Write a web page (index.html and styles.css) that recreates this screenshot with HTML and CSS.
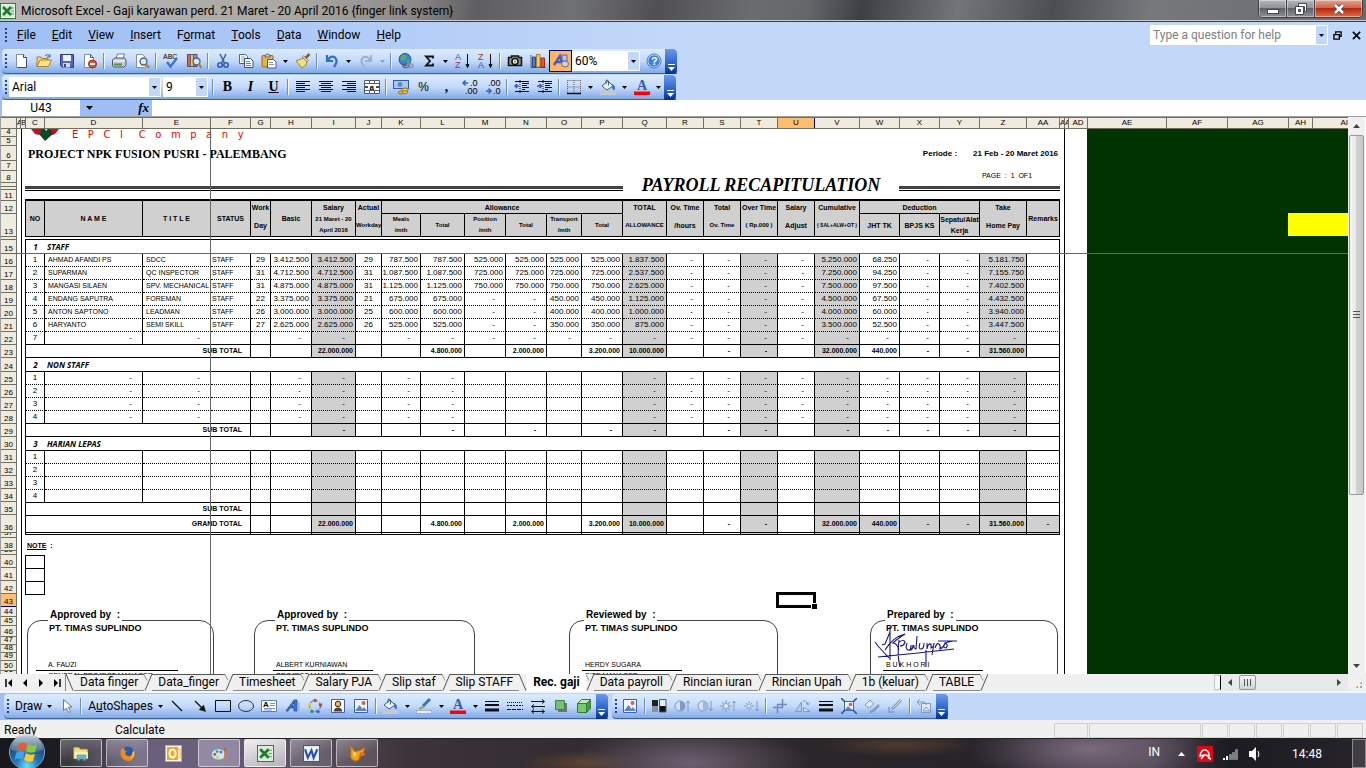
FILE: index.html
```html
<!DOCTYPE html>
<html lang="en">
<head>
    <meta charset="UTF-8">
    <meta name="viewport" content="width=device-width, initial-scale=1.0">
    <title>Microsoft Excel - Gaji karyawan</title>
    <link rel="stylesheet" href="styles.css">
</head>
<body>
    <svg class="sprite" xmlns="http://www.w3.org/2000/svg">
        <symbol id="excel" viewBox="0 0 16 16"><rect x="0.5" y="0.5" width="15" height="15" fill="#f2f7f0" stroke="#2f7d36"/><rect x="2" y="2" width="12" height="12" fill="#d7ead6"/><path d="M3 4l8 8M11 4l-8 8" stroke="#1c7a2c" stroke-width="2.6"/><path d="M11 5h3M11 8h3M11 11h3" stroke="#57a35c"/></symbol>
        <symbol id="new" viewBox="0 0 16 16"><path d="M3.500 1.500h7l3 3v10h-10z" fill="#fff" stroke="#7d8fb3"/><path d="M10.500 1.500v3h3" fill="#dbe5f7" stroke="#3a4a72"/><path d="M13.500 5v9.500h-9" fill="none" stroke="#3a4a72"/></symbol>
        <symbol id="open" viewBox="0 0 16 16"><path d="M1 13V4h4l1 1.500h6V8" fill="#f6d475" stroke="#a9792a"/><path d="M1 13.500l3-6.500h11.500l-3 6.500z" fill="#fbe38d" stroke="#b27f23"/><path d="M9 3q3-3 5 1m0 0v-3m0 3h-3" fill="none" stroke="#3a66b0"/></symbol>
        <symbol id="save" viewBox="0 0 16 16"><path d="M1.500 1.500h13v13h-11l-2-2z" fill="#5a64c6" stroke="#2f3788"/><rect x="4" y="2" width="8" height="6" fill="#f1f4fd"/><rect x="4" y="10" width="7" height="4.500" fill="#d7dcf3"/><rect x="5" y="11" width="2" height="3" fill="#39408f"/></symbol>
        <symbol id="perm" viewBox="0 0 16 16"><path d="M2.500 1.500h6l3 3v10h-9z" fill="#fff" stroke="#7d8fb3"/><path d="M8.500 1.500v3h3" fill="none" stroke="#3a4a72"/><circle cx="10.500" cy="11" r="4" fill="#e2522e" stroke="#a82a14"/><path d="M8 11h5" stroke="#fff" stroke-width="2"/></symbol>
        <symbol id="print" viewBox="0 0 16 16"><path d="M5 6l1.500-5h7L12 6z" fill="#fff" stroke="#6c7891"/><path d="M1.500 7l2-2h10l1.500 2v5l-2 2h-10l-1.500-1z" fill="#c7ccd2" stroke="#4e5866"/><path d="M2 8h12" stroke="#fff"/><path d="M3 11.500h8" stroke="#3f9a44" stroke-width="2"/></symbol>
        <symbol id="preview" viewBox="0 0 16 16"><path d="M2.500 1.500h6l3 3v10h-9z" fill="#fff" stroke="#7d8fb3"/><circle cx="9.500" cy="8.500" r="3.500" fill="#d4e8f6" stroke="#56657d" stroke-width="1.400"/><path d="M12 11l3 4" stroke="#b3813d" stroke-width="2.200"/></symbol>
        <symbol id="spell" viewBox="0 0 16 16"><text x="0" y="6" font-size="7">ABC</text><path d="M4 9l3.500 4.500L14 5" fill="none" stroke="#3d73cf" stroke-width="2.400"/></symbol>
        <symbol id="research" viewBox="0 0 16 16"><path d="M1.500 1.500h3v12h-3z" fill="#c96a6a" stroke="#6b3c7e"/><path d="M4.500 1.500h3v12h-3z" fill="#e9c86e" stroke="#7d5d3a"/><path d="M7.500 1.500h3.500v12h-3.500z" fill="#8d99d9" stroke="#454d94"/><circle cx="10.500" cy="8.500" r="3.500" fill="#d4e8f6" stroke="#56657d" stroke-width="1.400"/><path d="M13 11l2.500 4" stroke="#b3813d" stroke-width="2.200"/></symbol>
        <symbol id="cut" viewBox="0 0 16 16"><path d="M5 1l4.500 9M11 1L6.500 10" stroke="#44608f" stroke-width="1.500"/><circle cx="5" cy="12" r="2.200" fill="none" stroke="#2d5bb8" stroke-width="1.600"/><circle cx="11" cy="12" r="2.200" fill="none" stroke="#2d5bb8" stroke-width="1.600"/></symbol>
        <symbol id="copy" viewBox="0 0 16 16"><path d="M1.500 1.500h6l2 2v7h-8z" fill="#fff" stroke="#4668ad"/><path d="M3 4h4M3 6h5M3 8h5" stroke="#86a4dc"/><path d="M6.500 5.500h6l2.500 2.500v6.500h-8.500z" fill="#fff" stroke="#2c4f9a"/><path d="M8 8.500h4M8 10.500h5M8 12.500h5" stroke="#5c80c8"/></symbol>
        <symbol id="paste" viewBox="0 0 16 16"><rect x="1" y="2.500" width="11" height="11.500" rx="1" fill="#eab04a" stroke="#9c6a1c"/><path d="M4 4V2h1.500l1-1.500 1 1.500H9v2z" fill="#d8dce6" stroke="#5c6478"/><path d="M6.500 6.500h6l2.500 2.500v6h-8.500z" fill="#fff" stroke="#3b5fa8"/><path d="M8 9.500h4M8 11.500h5" stroke="#7f9bd6"/></symbol>
        <symbol id="brush" viewBox="0 0 16 16"><path d="M1 8l6 7 4-3 1-4-4-3z" fill="#f3df7c" stroke="#a5812e"/><path d="M7 4l5 5 1.500-1.500-5-5z" fill="#c9ced8" stroke="#636a78" stroke-width="0.600"/><path d="M10.500 5L14.500 1" stroke="#8e5b2b" stroke-width="2.500"/></symbol>
        <symbol id="undo" viewBox="0 0 16 16"><path d="M3 2v6h6M3.500 7.500Q7 2 11 4.500Q14.500 8 10 14" fill="none" stroke="#2f6bd0" stroke-width="2.200"/></symbol>
        <symbol id="redo" viewBox="0 0 16 16"><path d="M13 2v6H7M12.500 7.500Q9 2 5 4.500Q1.500 8 6 14" fill="none" stroke="#9cafd3" stroke-width="2"/></symbol>
        <symbol id="link" viewBox="0 0 16 16"><circle cx="7" cy="6.500" r="6" fill="#3f86cf" stroke="#245796"/><path d="M3 3q3-2.500 5 0t-2 4q-4 1-3-4M9 7q3-1 3 1l-3 3z" fill="#58b04c"/><rect x="5" y="11" width="6" height="3.500" rx="1.700" fill="none" stroke="#56657d" stroke-width="1.500"/><rect x="9" y="11" width="6" height="3.500" rx="1.700" fill="none" stroke="#8391ab" stroke-width="1.500"/></symbol>
        <symbol id="sum" viewBox="0 0 16 16"><path d="M12 5.500V3.500H5l4 4.500-4 4.500h7v-2" fill="none" stroke="#111" stroke-width="1.800"/></symbol>
        <symbol id="az" viewBox="0 0 16 16"><text x="0" y="7" font-size="9" fill="#3559a8">A</text><text x="0" y="15" font-size="9" fill="#a03434">Z</text><path d="M12.500 1v12M11 11.500l1.500 3 1.500-3z" fill="#111" stroke="#111"/></symbol>
        <symbol id="za" viewBox="0 0 16 16"><text x="0" y="7" font-size="9" fill="#a03434">Z</text><text x="0" y="15" font-size="9" fill="#3559a8">A</text><path d="M12.500 1v12M11 11.500l1.500 3 1.500-3z" fill="#111" stroke="#111"/></symbol>
        <symbol id="camera" viewBox="0 0 16 16"><path d="M1.500 4.500h3v-1.500h7v1.500h3v8h-13z" fill="#8f9484" stroke="#111" stroke-width="1.500"/><circle cx="8" cy="8.500" r="3" fill="#fff" stroke="#111" stroke-width="1.500"/><circle cx="8" cy="8.500" r="1" fill="#4d7b7b"/></symbol>
        <symbol id="chart" viewBox="0 0 16 16"><path d="M1 2v12.500h14.500" fill="none" stroke="#555"/><path d="M2.500 4h3v10h-3z" fill="#4b7fd8" stroke="#244a94"/><path d="M6.500 1.500h3.500v12.500h-3.500z" fill="#f6cf4f" stroke="#a8801d"/><path d="M11 5h3.500v9h-3.500z" fill="#e0573b" stroke="#962c17"/></symbol>
        <symbol id="drawing" viewBox="0 0 16 16"><path d="M1 12L7 3l3 9M3.500 9h6" fill="none" stroke="#5058b8" stroke-width="2.400"/><path d="M9 2h5v6h-5z" fill="#b9c4ea" stroke="#5b6298"/><ellipse cx="12" cy="11" rx="3.500" ry="3" fill="#cfd2d8" stroke="#6d7078"/></symbol>
        <symbol id="help" viewBox="0 0 16 16"><circle cx="8" cy="8" r="6.300" fill="#3f7fe0" stroke="#fff"/><circle cx="8" cy="8" r="7" fill="none" stroke="#2456ad" stroke-width="0.800"/><text x="5" y="12" font-size="11" font-weight="bold" fill="#fff">?</text></symbol>
        <symbol id="left" viewBox="0 0 16 16"><path d="M1 2.500h14M1 4.500h9M1 6.500h14M1 8.500h9M1 10.500h14M1 12.500h9" stroke="#111"/></symbol>
        <symbol id="center" viewBox="0 0 16 16"><path d="M1 2.500h14M3 4.500h10M1 6.500h14M3 8.500h10M1 10.500h14M3 12.500h10" stroke="#111"/></symbol>
        <symbol id="right" viewBox="0 0 16 16"><path d="M1 2.500h14M6 4.500h9M1 6.500h14M6 8.500h9M1 10.500h14M6 12.500h9" stroke="#111"/></symbol>
        <symbol id="merge" viewBox="0 0 16 16"><path d="M0.500 1.500h15v13h-15zM0.500 4.500h15M0.500 11.500h15M5.500 1.500v3M10.500 1.500v3M5.500 11.500v3M10.500 11.500v3" fill="#fff" stroke="#4d5c7a"/><text x="5.500" y="10.500" font-size="8" font-weight="bold">a</text><path d="M1 8h3M12 8h3" stroke="#111" stroke-width="1.500"/></symbol>
        <symbol id="currency" viewBox="0 0 16 16"><rect x="0.500" y="1.500" width="15" height="8" fill="#a9c6ef" stroke="#355c9e"/><circle cx="7" cy="5.500" r="2.400" fill="#5b87cf"/><ellipse cx="8" cy="13.500" rx="3" ry="1.500" fill="#f2b53a" stroke="#a6720f"/><ellipse cx="12" cy="13" rx="3" ry="1.500" fill="#f7cb5c" stroke="#a6720f"/><ellipse cx="12" cy="10.500" rx="3" ry="1.500" fill="#f7cb5c" stroke="#a6720f"/></symbol>
        <symbol id="decinc" viewBox="0 0 16 16"><text x="8" y="7" font-size="9">.0</text><text x="3" y="15" font-size="9">.00</text><path d="M1 4h5M3.500 1.500L1 4l2.500 2.500" fill="none" stroke="#2f62c4" stroke-width="1.500"/></symbol>
        <symbol id="decdec" viewBox="0 0 16 16"><text x="3" y="7" font-size="9">.00</text><text x="8" y="15" font-size="9">.0</text><path d="M1 12h5M3.500 9.500L6 12l-2.500 2.500" fill="none" stroke="#2f62c4" stroke-width="1.500"/></symbol>
        <symbol id="outdent" viewBox="0 0 16 16"><path d="M1 2.500h14M8 4.500h7M8 6.500h5M8 8.500h7M8 10.500h3M1 12.500h14" stroke="#111"/><path d="M6 1v14" stroke="#111" stroke-dasharray="1 1"/><path d="M1 7h4M3 5L1 7l2 2" fill="none" stroke="#2f62c4" stroke-width="1.500"/></symbol>
        <symbol id="indent" viewBox="0 0 16 16"><path d="M1 2.500h14M8 4.500h7M8 6.500h5M8 8.500h7M8 10.500h3M1 12.500h14" stroke="#111"/><path d="M6 1v14" stroke="#111" stroke-dasharray="1 1"/><path d="M0 7h4M2.500 5l2 2-2 2" fill="none" stroke="#2f62c4" stroke-width="1.500"/></symbol>
        <symbol id="borders" viewBox="0 0 16 16"><path d="M1.500 1.500h13M1.500 8h13M1.500 1v13M8 1v13M14.500 1v13" stroke="#666" stroke-dasharray="1 1"/><path d="M1 14.500h14" stroke="#111" stroke-width="1.500"/></symbol>
        <symbol id="fill" viewBox="0 0 16 16"><path d="M2 7l6-5 5 5-6 4z" fill="#eef3fa" stroke="#455d86"/><path d="M6 5V1.500q2-1.500 2.500 1v4" fill="none" stroke="#455d86"/><path d="M12 5q4 2 2 6-2-1-1.500-5z" fill="#3c73c8" stroke="#3c73c8"/><rect y="12.500" width="16" height="3.500" fill="#c6c8cb"/></symbol>
        <symbol id="fontcolor" viewBox="0 0 16 16"><text x="3" y="11" font-size="14" font-weight="bold" font-family="Liberation Serif" fill="#3559a8">A</text><rect y="12.500" width="16" height="3.500" fill="#f00"/></symbol>
        <symbol id="pointer" viewBox="0 0 16 16"><path d="M4.500 1.500v11l3-2.500 2 4.500 2-1-2-4.500h3.500z" fill="#fff" stroke="#6a7890"/></symbol>
        <symbol id="line" viewBox="0 0 16 16"><path d="M3 3l10 10" stroke="#111" stroke-width="1.300"/></symbol>
        <symbol id="arrow" viewBox="0 0 16 16"><path d="M3 3l8 8M13 13l-5-1.500 3.500-3.500z" fill="#111" stroke="#111" stroke-width="1.300"/></symbol>
        <symbol id="rect" viewBox="0 0 16 16"><path d="M0.500 2.500h15v11h-15z" fill="none" stroke="#111"/></symbol>
        <symbol id="oval" viewBox="0 0 16 16"><ellipse cx="8" cy="8" rx="7.500" ry="5.500" fill="none" stroke="#333"/></symbol>
        <symbol id="textbox" viewBox="0 0 16 16"><path d="M0.500 2.500h15v11h-15z" fill="#fff" stroke="#6a7fa8"/><text x="2" y="9" font-size="8" font-weight="bold">A</text><path d="M9 5.500h5M9 7.500h5M3 10.500h11M3 12h8" stroke="#7793c7"/></symbol>
        <symbol id="wordart" viewBox="0 0 16 16"><path d="M2 13L10 2h3v11h-3v-3H6l-2 3zM8 8h2.500V4z" fill="#3f74d2" stroke="#254a91" stroke-width="0.800" fill-rule="evenodd"/><path d="M13.500 3l2 2v9l-2-1z" fill="#8fb2ea"/></symbol>
        <symbol id="diagram" viewBox="0 0 16 16"><circle cx="8" cy="8" r="5.500" fill="none" stroke="#334a86" stroke-dasharray="3 2"/><circle cx="8" cy="2.500" r="1.800" fill="#cf4a33"/><circle cx="2.500" cy="7" r="1.800" fill="#e5c23f"/><circle cx="13.500" cy="7" r="1.800" fill="#cf4a33"/><circle cx="5" cy="13.500" r="1.800" fill="#3e9c46"/><circle cx="11" cy="13.500" r="1.800" fill="#3f6fd0"/></symbol>
        <symbol id="clip" viewBox="0 0 16 16"><path d="M1.500 1.500h13v13h-13z" fill="#fff" stroke="#3f62a8"/><circle cx="8" cy="6" r="2.800" fill="#edb66f" stroke="#3b2718"/><path d="M3.500 13.500q1-4 4.500-4t4.500 4z" fill="#58412c"/></symbol>
        <symbol id="picture" viewBox="0 0 16 16"><path d="M1.500 1.500h13v13h-13z" fill="#eef4ff" stroke="#3f62a8"/><path d="M2 13l4.500-6 3 4 1.500-2L14 13z" fill="#5d83c7"/><circle cx="10.500" cy="5" r="2" fill="#d9603a"/></symbol>
        <symbol id="linecolor" viewBox="0 0 16 16"><path d="M14 1L7 8" stroke="#3a6fcb" stroke-width="3"/><path d="M7.500 7L3 11l5-1.500z" fill="#e6b95c" stroke="#8e6a26" stroke-width="0.600"/><rect x="0.500" y="12.500" width="15" height="3" fill="#e5ebf5" stroke="#8c98ae" stroke-width="0.600"/></symbol>
        <symbol id="linestyle" viewBox="0 0 16 16"><path d="M1 3.500h14" stroke="#111"/><path d="M1 7h14" stroke="#111" stroke-width="2"/><path d="M1 12h14" stroke="#111" stroke-width="3"/></symbol>
        <symbol id="dash" viewBox="0 0 16 16"><path d="M0 4.500h16" stroke="#111" stroke-dasharray="1 1"/><path d="M0 7.500h16" stroke="#111" stroke-dasharray="2 1"/><path d="M0 11.500h16" stroke="#111" stroke-dasharray="4 1"/></symbol>
        <symbol id="arrowstyle" viewBox="0 0 16 16"><path d="M1 3.500h13M2 8.500h13M2 13.500h12M12 1.500l2.500 2-2.500 2M4 6.500L1.500 8.500l2.500 2M4 11.500l-2.500 2 2.500 2M12 11.500l2.500 2-2.500 2" fill="none" stroke="#111"/></symbol>
        <symbol id="shadow" viewBox="0 0 16 16"><path d="M5 5h9v9H5z" fill="#6d776f"/><path d="M2.500 2.500h9v9h-9z" fill="#74c26e" stroke="#3d8541"/></symbol>
        <symbol id="cube" viewBox="0 0 16 16"><path d="M1.500 5.500h9v9h-9z" fill="#7bc873" stroke="#2f7d36"/><path d="M1.500 5.500l4-4h9l-4 4z" fill="#c0e8b8" stroke="#2f7d36"/><path d="M10.500 5.500l4-4v9l-4 4z" fill="#4b9a4c" stroke="#2f7d36"/></symbol>
        <symbol id="color" viewBox="0 0 16 16"><path d="M1 2h6v6H1z" fill="#222"/><path d="M1 8h6v6H1z" fill="#89919e"/><path d="M9 2h6v6H9z" fill="#e8edf5"/><path d="M9 8h6v6H9z" fill="#111"/><path d="M8.500 1.500h6.500v12.500H8.500z" fill="none" stroke="#555"/></symbol>
        <symbol id="contup" viewBox="0 0 16 16"><circle cx="6" cy="8" r="5" fill="#d3e0f5" stroke="#8299c4"/><path d="M6 3v10a5 5 0 0 0 0-10z" fill="#8299c4"/><path d="M14 13V3M12 5.500L14 3l2 2.500" fill="none" stroke="#8299c4"/></symbol>
        <symbol id="contdn" viewBox="0 0 16 16"><circle cx="6" cy="8" r="5" fill="#d3e0f5" stroke="#8299c4"/><path d="M6 3v10a5 5 0 0 0 0-10z" fill="#a6b8da"/><path d="M14 3v10M12 10.500l2 2.500 2-2.500" fill="none" stroke="#8299c4"/></symbol>
        <symbol id="briup" viewBox="0 0 16 16"><circle cx="6" cy="8" r="2.500" fill="#eef3fc" stroke="#8299c4"/><path d="M6 2v3M6 11v3M0 8h3M9 8h3M2 4l2 2M8 10l2 2M10 4L8 6M4 10l-2 2M14 13V3M12.500 5L14 3l1.500 2" fill="none" stroke="#8299c4"/></symbol>
        <symbol id="bridn" viewBox="0 0 16 16"><circle cx="6" cy="8" r="2" fill="#eef3fc" stroke="#8299c4"/><path d="M6 3v2M6 11v2M1 8h2M9 8h2M3 5l1 1M8 10l1 1M9 5L8 6M4 10l-1 1M14 3v10M12.500 11l1.500 2 1.500-2" fill="none" stroke="#8299c4"/></symbol>
        <symbol id="crop" viewBox="0 0 16 16"><path d="M5.500 15V6.500H15M1 9.500h9.500V1" fill="none" stroke="#7088b8" stroke-width="1.500"/></symbol>
        <symbol id="rotate" viewBox="0 0 16 16"><path d="M6.500 4v9.500h-6z" fill="#b9c8e4" stroke="#8299c4"/><path d="M8.500 9.500l6.500 4H8.500z" fill="#dfe8f7" stroke="#8299c4"/><path d="M8 3q4-1 5 4M11 5l2 2 1.500-2.500" fill="none" stroke="#8299c4"/></symbol>
        <symbol id="compress" viewBox="0 0 16 16"><path d="M3.500 3.500h9v9h-9z" fill="#eef4ff" stroke="#3f62a8"/><path d="M4 12l3-4 2 2 3 2z" fill="#5d83c7"/><circle cx="9.500" cy="6.500" r="1.800" fill="#d9603a"/><path d="M0 0l4 4M16 0l-4 4M0 16l4-4M16 16l-4-4" stroke="#284c96" stroke-width="1.500"/></symbol>
        <symbol id="format" viewBox="0 0 16 16"><path d="M1 7l5-5 4 4-5 4z" fill="#dfe8f7" stroke="#8299c4"/><path d="M15 7l-6 6-3 1" fill="none" stroke="#8299c4" stroke-width="2.500"/></symbol>
        <symbol id="transp" viewBox="0 0 16 16"><path d="M14 2L5 11" stroke="#8299c4" stroke-width="3"/><path d="M14 2L6 10" stroke="#dfe8f7"/><path d="M2 9v5h5" fill="none" stroke="#8299c4" stroke-width="1.500"/></symbol>
        <symbol id="reset" viewBox="0 0 16 16"><path d="M5.500 5.500h9v9h-9z" fill="#dfe8f7" stroke="#8299c4"/><path d="M7 13l3-4 2 2 2 2zM1 4h7q2 0 2 3M4 1L1 4l3 3" fill="none" stroke="#8299c4"/></symbol>
        <symbol id="caret" viewBox="0 0 5 3"><path d="M0 0h5L2.500 3z"/></symbol>
        <symbol id="explorer" viewBox="0 0 20 18"><path d="M1 15V2h6l1.500 2H17v11z" fill="#f4dc82" stroke="#caa13e"/><path d="M1.500 7h16v8h-16z" fill="#fbefb0"/><path d="M5 17v-6h10v6h-3v-3H8v3z" fill="#6fc1ea" stroke="#3184b8"/></symbol>
        <symbol id="firefox" viewBox="0 0 18 18"><circle cx="9" cy="9" r="7.500" fill="#2a5ba8"/><path d="M2 5q-2 8 4 11t10-3q1.500-4-.5-8 0 5-4 7-5 0-5-4l2-1q-4-1-2.500-4-2 0-4 2z" fill="#f08a1d"/><path d="M16 6q1 7-5 9 4-3 3-7z" fill="#f8c93c"/></symbol>
        <symbol id="outlook" viewBox="0 0 18 18"><rect x="0.500" y="0.500" width="17" height="17" fill="#fff" stroke="#f0a81c"/><rect x="2" y="2" width="12" height="14" fill="#f5a81c"/><ellipse cx="8" cy="9" rx="3.200" ry="4.200" fill="none" stroke="#fff" stroke-width="2"/><path d="M14 4.500h2v9h-2" fill="none" stroke="#f5a81c"/></symbol>
        <symbol id="paint" viewBox="0 0 18 18"><ellipse cx="8" cy="10" rx="7.500" ry="6" fill="#cfe4f4" stroke="#5f98c4"/><circle cx="4" cy="10" r="1.500" fill="#d8402c"/><circle cx="6.500" cy="7" r="1.500" fill="#41a047"/><circle cx="10.500" cy="7.500" r="1.500" fill="#2b6fd0"/><circle cx="7" cy="13" r="1.500" fill="#eec335"/><path d="M14 6h2v10h-2z" fill="#e0761f"/><path d="M13.500 6q1.500-8 3 0z" fill="#b26a2c"/></symbol>
        <symbol id="word" viewBox="0 0 16 16"><rect x="0.500" y="0.500" width="15" height="15" fill="#eef3fc" stroke="#2c5ab0"/><path d="M2 4l2.500 8L8 5l2 7 3.500-8" fill="none" stroke="#2553ad" stroke-width="2"/></symbol>
        <symbol id="fox" viewBox="0 0 18 18"><path d="M2 1l4 6 5-1 6-3-2 5 2 2-5 2-2 4-4 1-4-3z" fill="#f6a01c" stroke="#cf6d0c"/><path d="M4 8l4 0-2 5z" fill="#fde26a"/><path d="M12 8l4 0-6 6z" fill="#e0641b"/></symbol>
    </svg>

    <header class="titlebar">
        <svg class="app-icon"><use href="#excel"/></svg>
        <h1>Microsoft Excel - Gaji karyawan perd. 21 Maret - 20 April 2016 {finger link system}</h1>
        <div class="window-buttons">
            <button class="win" title="Minimize"><svg viewBox="0 0 14 12"><rect x="1.500" y="6.500" width="11" height="4" fill="#fff" stroke="#445"/></svg></button>
            <button class="win" title="Restore"><svg viewBox="0 0 14 12"><path d="M4.500 0.500h8v8h-2v-5h-6z" fill="#fff" stroke="#445"/><path d="M1.500 3.500h8v8h-8zM4.500 6.500v2h2v-2z" fill="#fff" fill-rule="evenodd" stroke="#445"/></svg></button>
            <button class="win win-close" title="Close"><svg viewBox="0 0 14 12"><path d="M3 2l8 8M11 2l-8 8" stroke="#545" stroke-width="4.500"/><path d="M3 2l8 8M11 2l-8 8" stroke="#fff" stroke-width="2.500"/></svg></button>
        </div>
    </header>

    <div class="chrome">
        <nav class="menubar">
            <span class="grip"></span>
            <button><u>F</u>ile</button>
            <button><u>E</u>dit</button>
            <button><u>V</u>iew</button>
            <button><u>I</u>nsert</button>
            <button>F<u>o</u>rmat</button>
            <button><u>T</u>ools</button>
            <button><u>D</u>ata</button>
            <button><u>W</u>indow</button>
            <button><u>H</u>elp</button>
            <div class="ask">
                <input type="text" placeholder="Type a question for help" aria-label="Type a question for help">
                <button class="drop" title="Recent questions"><svg class="caret"><use href="#caret"/></svg></button>
            </div>
            <button class="doc-btn" title="Restore Window"><svg viewBox="0 0 10 10"><path d="M3 3V1h6v5H7" fill="none" stroke="#000" stroke-width="1.500"/><path d="M1 4h6v5H1z" fill="none" stroke="#000" stroke-width="1.500"/></svg></button>
            <button class="doc-btn" title="Close Window"><svg viewBox="0 0 10 10"><path d="M1 1l8 8M9 1L1 9" stroke="#000" stroke-width="1.800"/></svg></button>
        </nav>

        <div class="toolbar">
            <span class="grip"></span>
            <button class="tool" title="New"><svg><use href="#new"/></svg></button>
            <button class="tool" title="Open"><svg><use href="#open"/></svg></button>
            <button class="tool" title="Save"><svg><use href="#save"/></svg></button>
            <button class="tool" title="Permission"><svg><use href="#perm"/></svg></button>
            <span class="sep"></span>
            <button class="tool" title="Print"><svg><use href="#print"/></svg></button>
            <button class="tool" title="Print Preview"><svg><use href="#preview"/></svg></button>
            <span class="sep"></span>
            <button class="tool" title="Spelling"><svg><use href="#spell"/></svg></button>
            <button class="tool" title="Research"><svg><use href="#research"/></svg></button>
            <span class="sep"></span>
            <button class="tool" title="Cut"><svg><use href="#cut"/></svg></button>
            <button class="tool" title="Copy"><svg><use href="#copy"/></svg></button>
            <button class="tool" title="Paste"><svg><use href="#paste"/></svg></button>
            <button class="more" title="Paste options"><svg class="caret"><use href="#caret"/></svg></button>
            <button class="tool" title="Format Painter"><svg><use href="#brush"/></svg></button>
            <span class="sep"></span>
            <button class="tool" title="Undo"><svg><use href="#undo"/></svg></button>
            <button class="more" title="Undo list"><svg class="caret"><use href="#caret"/></svg></button>
            <button class="tool" title="Redo"><svg><use href="#redo"/></svg></button>
            <button class="more off" title="Redo list"><svg class="caret"><use href="#caret"/></svg></button>
            <span class="sep"></span>
            <button class="tool" title="Hyperlink"><svg><use href="#link"/></svg></button>
            <button class="tool" title="AutoSum"><svg><use href="#sum"/></svg></button>
            <button class="more" title="Functions"><svg class="caret"><use href="#caret"/></svg></button>
            <button class="tool" title="Sort Ascending"><svg><use href="#az"/></svg></button>
            <button class="tool" title="Sort Descending"><svg><use href="#za"/></svg></button>
            <span class="sep"></span>
            <button class="tool" title="Camera"><svg><use href="#camera"/></svg></button>
            <button class="tool" title="Chart Wizard"><svg><use href="#chart"/></svg></button>
            <button class="tool pressed" title="Drawing"><svg><use href="#drawing"/></svg></button>
            <div class="combo combo-zoom">
                <input type="text" value="60%" aria-label="Zoom">
                <button class="drop" title="Zoom list"><svg class="caret"><use href="#caret"/></svg></button>
            </div>
            <button class="tool" title="Help"><svg><use href="#help"/></svg></button>
            <button class="cap" title="Toolbar Options"><svg viewBox="0 0 7 7"><path d="M0 0.500h7" stroke="#fff"/><path d="M0 3h7L3.500 7z" fill="#fff"/></svg></button>
        </div>

        <div class="toolbar">
            <span class="grip"></span>
            <div class="combo combo-font">
                <input type="text" value="Arial" aria-label="Font">
                <button class="drop" title="Font list"><svg class="caret"><use href="#caret"/></svg></button>
            </div>
            <div class="combo combo-size">
                <input type="text" value="9" aria-label="Font size">
                <button class="drop" title="Size list"><svg class="caret"><use href="#caret"/></svg></button>
            </div>
            <span class="sep"></span>
            <button class="tool letter"><b>B</b></button>
            <button class="tool letter"><b><i>I</i></b></button>
            <button class="tool letter"><b><u>U</u></b></button>
            <span class="sep"></span>
            <button class="tool" title="Align Left"><svg><use href="#left"/></svg></button>
            <button class="tool" title="Center"><svg><use href="#center"/></svg></button>
            <button class="tool" title="Align Right"><svg><use href="#right"/></svg></button>
            <button class="tool" title="Merge and Center"><svg><use href="#merge"/></svg></button>
            <span class="sep"></span>
            <button class="tool" title="Currency Style"><svg><use href="#currency"/></svg></button>
            <button class="tool sign-btn">%</button>
            <button class="tool letter"><b>,</b></button>
            <button class="tool" title="Increase Decimal"><svg><use href="#decinc"/></svg></button>
            <button class="tool" title="Decrease Decimal"><svg><use href="#decdec"/></svg></button>
            <span class="sep"></span>
            <button class="tool" title="Decrease Indent"><svg><use href="#outdent"/></svg></button>
            <button class="tool" title="Increase Indent"><svg><use href="#indent"/></svg></button>
            <span class="sep"></span>
            <button class="tool" title="Borders"><svg><use href="#borders"/></svg></button>
            <button class="more" title="Border list"><svg class="caret"><use href="#caret"/></svg></button>
            <button class="tool" title="Fill Color"><svg><use href="#fill"/></svg></button>
            <button class="more" title="Fill list"><svg class="caret"><use href="#caret"/></svg></button>
            <button class="tool" title="Font Color"><svg><use href="#fontcolor"/></svg></button>
            <button class="more" title="Color list"><svg class="caret"><use href="#caret"/></svg></button>
            <button class="cap" title="Toolbar Options"><svg viewBox="0 0 7 7"><path d="M0 0.500h7" stroke="#fff"/><path d="M0 3h7L3.500 7z" fill="#fff"/></svg></button>
        </div>
    </div>

    <div class="formulabar">
        <input class="namebox" type="text" value="U43" aria-label="Name box">
        <button class="name-drop" title="Names"><svg viewBox="0 0 7 4"><path d="M0 0h7L3.500 4z"/></svg></button>
        <button class="fx"><i>fx</i></button>
        <input class="formula" type="text" aria-label="Formula">
    </div>

    <main class="sheet">
        <div class="grid">
            <div class="col-heads" id="colHeads"></div>
            <div class="grid-body">
                <div class="row-heads" id="rowHeads"></div>
                <div class="page">
                    <div class="page-logo">
                        <svg viewBox="0 0 28 12"><path d="M0 0h12l-4 6-4-1zM16 0h12l-4 5-3 1z" fill="#c1121f"/><path d="M8 5l3-5h3l1 2 2-2h2l3 5-8 7z" fill="#0b4a22"/></svg>
                        <span>E   P   C   I     C   o   m   p   a   n   y</span>
                    </div>
                    <div class="page-project">
                        <h2>PROJECT NPK FUSION PUSRI - PALEMBANG</h2>
                        <p><span>Periode :</span><span>21 Feb - 20 Maret 2016</span></p>
                    </div>
                    <p class="page-no">PAGE &nbsp;: &nbsp;1 &nbsp;OF1</p>
                    <div class="page-title">
                        <span class="rule rule-left"></span>
                        <h3>PAYROLL RECAPITULATION</h3>
                        <span class="rule rule-right"></span>
                    </div>

                    <table class="payroll">
                        <colgroup id="payrollCols"></colgroup>
                        <thead>
                            <tr class="head-top">
                                <th rowspan="2">NO</th>
                                <th rowspan="2">N A M E</th>
                                <th rowspan="2">T I T L E</th>
                                <th rowspan="2">STATUS</th>
                                <th class="open">Work</th>
                                <th rowspan="2">Basic</th>
                                <th class="open">Salary</th>
                                <th class="open">Actual</th>
                                <th colspan="6">Allowance</th>
                                <th class="open">TOTAL</th>
                                <th class="open">Ov. Time</th>
                                <th class="open">Total</th>
                                <th class="open">Over Time</th>
                                <th class="open">Salary</th>
                                <th class="open">Cumulative</th>
                                <th colspan="3">Deduction</th>
                                <th class="open">Take</th>
                                <th rowspan="2">Remarks</th>
                            </tr>
                            <tr class="head-sub">
                                <th>Day</th>
                                <th class="small">21 Maret - 20<br>April 2016</th>
                                <th class="small">Workday</th>
                                <th class="small">Meals<br>/mth</th>
                                <th class="small">Total</th>
                                <th class="small">Position<br>/mth</th>
                                <th class="small">Total</th>
                                <th class="small">Transport<br>/mth</th>
                                <th class="small">Total</th>
                                <th class="small">ALLOWANCE</th>
                                <th>/hours</th>
                                <th class="small">Ov. Time</th>
                                <th class="small">( Rp.000 )</th>
                                <th>Adjust</th>
                                <th class="tiny">( SAL+ALW+OT )</th>
                                <th>JHT TK</th>
                                <th>BPJS KS</th>
                                <th>Sepatu/Alat<br>Kerja</th>
                                <th>Home Pay</th>
                            </tr>
                        </thead>
                        <tbody id="payrollBody"></tbody>
                    </table>

                    <p class="note"><u>NOTE</u> &nbsp;:</p>
                    <div class="note-boxes"><span></span><span></span><span></span></div>

                    <div class="signatures">
                        <fieldset class="signature signature-wide">
                            <legend>Approved by &nbsp;:</legend>
                            <p class="company">PT. TIMAS SUPLINDO</p>
                            <p class="person">A. FAUZI</p>
                            <p class="role">GENERAL PROJECT MANAGER</p>
                        </fieldset>
                        <fieldset class="signature">
                            <legend>Approved by &nbsp;:</legend>
                            <p class="company">PT. TIMAS SUPLINDO</p>
                            <p class="person">ALBERT KURNIAWAN</p>
                            <p class="role">PROJECT MANAGER</p>
                        </fieldset>
                        <fieldset class="signature signature-near">
                            <legend>Reviewed by &nbsp;:</legend>
                            <p class="company">PT. TIMAS SUPLINDO</p>
                            <p class="person">HERDY SUGARA</p>
                            <p class="role">SITE MANAGER</p>
                        </fieldset>
                        <fieldset class="signature signature-near">
                            <legend>Prepared by &nbsp;:</legend>
                            <p class="company">PT. TIMAS SUPLINDO</p>
                            <p class="person">B U K H O R I</p>
                            <svg class="ink" viewBox="0 0 84 44"><path d="M1 16l3 4 11 12M8 19l3-1 5-12 0-5v33M11 24q8-13 20-16-8 5-12 9 4 0 6 7M4 31l40-4 36-4M64 15h19M25 14q-2 16 1 27M25 16q5-3 6 0-1 4-5 4M33 17q-2 6 1 7t3-5l0 5q2-1 2-5M43 10l-1 13q-3-1-2-4M46 17q-2 6 1 6t3-6M53 17l0 6q1-6 4-5v4q3-1 3-5l-2 12M52 24v17M61 22q2-6 4-4t1 5q4-2 5-6 4 2 1 5-4 0-1-5 3-1 8-2" fill="none" stroke="#14148c" stroke-width="1.100"/></svg>
                        </fieldset>
                    </div>
                </div>
                <div class="page-gap"></div>
                <div class="backdrop"><div class="highlight"></div></div>
            </div>
            <div class="freeze-v"></div>
            <div class="freeze-h"></div>
            <div class="cursor"><span></span></div>
        </div>
        <div class="vscroll">
            <button title="Up"><svg viewBox="0 0 7 4"><path d="M0 4h7L3.500 0z"/></svg></button>
            <div class="thumb"></div>
            <div class="track"></div>
            <button title="Down"><svg viewBox="0 0 7 4"><path d="M0 0h7L3.500 4z"/></svg></button>
        </div>
    </main>

    <div class="tabbar">
        <button class="nav" title="First"><svg viewBox="0 0 8 8"><path d="M1 0v8" stroke="#000" stroke-width="1.500"/><path d="M7 0v8L3 4z"/></svg></button>
        <button class="nav" title="Previous"><svg viewBox="0 0 8 8"><path d="M6 0v8L2 4z"/></svg></button>
        <button class="nav" title="Next"><svg viewBox="0 0 8 8"><path d="M2 0v8l4-4z"/></svg></button>
        <button class="nav" title="Last"><svg viewBox="0 0 8 8"><path d="M7 0v8" stroke="#000" stroke-width="1.500"/><path d="M1 0v8l4-4z"/></svg></button>
        <div class="tabs" id="tabs"></div>
        <div class="hscroll">
            <span class="splitter"></span>
            <button title="Left"><svg viewBox="0 0 4 7"><path d="M4 0v7L0 3.500z"/></svg></button>
            <div class="hthumb"></div>
            <button class="hright" title="Right"><svg viewBox="0 0 4 7"><path d="M0 0v7l4-3.500z"/></svg></button>
        </div>
        <span class="resize"></span>
    </div>

    <div class="drawbar">
        <div class="toolbar">
            <span class="grip"></span>
            <button class="text-tool"><span>D<u>r</u>aw</span><svg class="caret"><use href="#caret"/></svg></button>
            <button class="tool" title="Select Objects"><svg><use href="#pointer"/></svg></button>
            <span class="sep"></span>
            <button class="text-tool"><span>A<u>u</u>toShapes</span><svg class="caret"><use href="#caret"/></svg></button>
            <button class="tool" title="Line"><svg><use href="#line"/></svg></button>
            <button class="tool" title="Arrow"><svg><use href="#arrow"/></svg></button>
            <button class="tool" title="Rectangle"><svg><use href="#rect"/></svg></button>
            <button class="tool" title="Oval"><svg><use href="#oval"/></svg></button>
            <button class="tool" title="Text Box"><svg><use href="#textbox"/></svg></button>
            <button class="tool" title="WordArt"><svg><use href="#wordart"/></svg></button>
            <button class="tool" title="Diagram"><svg><use href="#diagram"/></svg></button>
            <button class="tool" title="Clip Art"><svg><use href="#clip"/></svg></button>
            <button class="tool" title="Picture"><svg><use href="#picture"/></svg></button>
            <span class="sep"></span>
            <button class="tool" title="Fill Color"><svg><use href="#fill"/></svg></button>
            <button class="more" title="Fill list"><svg class="caret"><use href="#caret"/></svg></button>
            <button class="tool" title="Line Color"><svg><use href="#linecolor"/></svg></button>
            <button class="more" title="Line list"><svg class="caret"><use href="#caret"/></svg></button>
            <button class="tool" title="Font Color"><svg><use href="#fontcolor"/></svg></button>
            <button class="more" title="Color list"><svg class="caret"><use href="#caret"/></svg></button>
            <button class="tool" title="Line Style"><svg><use href="#linestyle"/></svg></button>
            <button class="tool" title="Dash Style"><svg><use href="#dash"/></svg></button>
            <button class="tool" title="Arrow Style"><svg><use href="#arrowstyle"/></svg></button>
            <button class="tool" title="Shadow Style"><svg><use href="#shadow"/></svg></button>
            <button class="tool" title="3-D Style"><svg><use href="#cube"/></svg></button>
            <button class="cap" title="Toolbar Options"><svg viewBox="0 0 7 7"><path d="M0 0.500h7" stroke="#fff"/><path d="M0 3h7L3.500 7z" fill="#fff"/></svg></button>
        </div>
        <div class="toolbar">
            <span class="grip"></span>
            <button class="tool" title="Insert Picture"><svg><use href="#picture"/></svg></button>
            <span class="sep"></span>
            <button class="tool" title="Color"><svg><use href="#color"/></svg></button>
            <button class="tool" title="More Contrast"><svg><use href="#contup"/></svg></button>
            <button class="tool" title="Less Contrast"><svg><use href="#contdn"/></svg></button>
            <button class="tool" title="More Brightness"><svg><use href="#briup"/></svg></button>
            <button class="tool" title="Less Brightness"><svg><use href="#bridn"/></svg></button>
            <span class="sep"></span>
            <button class="tool" title="Crop"><svg><use href="#crop"/></svg></button>
            <button class="tool" title="Rotate Left"><svg><use href="#rotate"/></svg></button>
            <button class="tool" title="Line Style"><svg><use href="#linestyle"/></svg></button>
            <button class="tool" title="Compress Pictures"><svg><use href="#compress"/></svg></button>
            <button class="tool" title="Format Picture"><svg><use href="#format"/></svg></button>
            <button class="tool" title="Set Transparent Color"><svg><use href="#transp"/></svg></button>
            <span class="sep"></span>
            <button class="tool" title="Reset Picture"><svg><use href="#reset"/></svg></button>
            <button class="cap" title="Toolbar Options"><svg viewBox="0 0 7 7"><path d="M0 0.500h7" stroke="#fff"/><path d="M0 3h7L3.500 7z" fill="#fff"/></svg></button>
        </div>
    </div>

    <div class="statusbar">
        <span class="status-ready">Ready</span>
        <span>Calculate</span>
        <div class="panes">
            <span class="pane"></span><span class="pane pane-wide"></span><span class="pane"></span><span class="pane"></span>
            <span class="pane"></span><span class="pane"></span><span class="pane"></span><span class="pane"></span>
        </div>
    </div>

    <footer class="taskbar">
        <button class="start" title="Start"><svg viewBox="0 0 38 38">
            <defs>
                <radialGradient id="orb" cx="0.5" cy="0.9" r="0.8"><stop offset="0" stop-color="#6fe0f5"/><stop offset="0.4" stop-color="#2277b5"/><stop offset="1" stop-color="#1b3c62"/></radialGradient>
                <linearGradient id="gloss" x1="0" y1="0" x2="0" y2="1"><stop offset="0" stop-color="#fff" stop-opacity="0.8"/><stop offset="1" stop-color="#fff" stop-opacity="0.1"/></linearGradient>
            </defs>
            <circle cx="19" cy="19" r="17.500" fill="url(#orb)" stroke="#86a5bf"/>
            <path d="M3 17a16 16 0 0 1 32 0q-16 6-32 0z" fill="url(#gloss)"/>
            <path d="M11 11q4-3 8 0l-2 7q-4-2-8 0z" fill="#ef5a2a"/><path d="M20 11q4 3 9 1l-2 7q-5 2-9-1z" fill="#8dc63f"/>
            <path d="M8.500 19.500q4-3 8 0l-2 7q-4-2-8 0z" fill="#3aa5e8"/><path d="M18 20q4 3 9 1l-2 7q-5 2-9-1z" fill="#fdc82f"/>
        </svg></button>
        <button class="task" title="Explorer"><svg><use href="#explorer"/></svg></button>
        <button class="task" title="Firefox"><svg><use href="#firefox"/></svg></button>
        <button class="task task-idle" title="Outlook"><svg><use href="#outlook"/></svg></button>
        <button class="task task-lit" title="Paint"><svg><use href="#paint"/></svg></button>
        <button class="task task-active" title="Excel"><svg><use href="#excel"/></svg></button>
        <button class="task" title="Word"><svg><use href="#word"/></svg></button>
        <button class="task" title="FoxPro"><svg><use href="#fox"/></svg></button>
        <div class="tray">
            <span class="lang">IN</span>
            <svg class="tray-up" viewBox="0 0 7 4"><path d="M0 4h7L3.500 0z" fill="#fff"/></svg>
            <svg class="tray-icon" viewBox="0 0 16 16"><rect width="16" height="16" rx="1" fill="#e30613"/><path d="M3 10Q4 3 9 4q4 2 3 8-1-3-3.500-3T3 10zM7.500 9L4 13M11 12l3 1" fill="none" stroke="#fff" stroke-width="1.400"/></svg>
            <svg class="tray-icon" viewBox="0 0 16 16"><path d="M1 12h2v2H1z" fill="#fff"/><path d="M4 10h2v4H4z" fill="#fff"/><path d="M7.500 8.500h2v5h-2zM10.500 6.500h2v7h-2zM13.500 3.500h2v10h-2z" fill="#777" stroke="#aaa" stroke-width="0.600"/></svg>
            <svg class="tray-icon" viewBox="0 0 16 16"><path d="M2 5h3l4-4v14l-4-4H2z" fill="#fff"/><path d="M11 5q2 3 0 6" fill="none" stroke="#fff"/></svg>
            <time>14:48</time>
        </div>
        <button class="desktop" title="Show desktop"></button>
    </footer>

    <script src="script.js"></script>
</body>
</html>
```
FILE: styles.css
```css
* {
    margin: 0;
    padding: 0;
    box-sizing: border-box;
}

body {
    height: 100vh;
    display: flex;
    flex-direction: column;
    overflow: hidden;
    font: 12px/16px Roboto, "Noto Sans", sans-serif;
    color: #000;
    background: #c3d8f9;
}

button,
input {
    font: inherit;
    color: inherit;
    border: none;
    border-radius: 0;
    background: none;
    outline: none;
}

svg {
    display: block;
}

.sprite {
    position: absolute;
    width: 0;
    height: 0;
}

/* Title bar */
.titlebar {
    flex: none;
    height: 22px;
    display: flex;
    align-items: center;
    gap: 5px;
    border-bottom: 1px solid #3a3c44;
    box-shadow: inset 0 -1px #c9cbd0;
    background: linear-gradient(100deg, #b9b8b6 0, #a9a7a4 22%, #8d8b8a 30%, #5f5e60 35%, #707174 42%, #505054 48%, #6b6c70 55%, #66676b 59%, #3f4046 63%, #74757a 70%, #4d4e54 77%, #77787c 84%, #6a6b70 100%);
}

.titlebar h1 {
    flex: 1;
    font-size: 12px;
    font-weight: normal;
}

.app-icon {
    width: 16px;
    height: 16px;
}

.window-buttons {
    align-self: flex-start;
    display: flex;
    margin-right: 3px;
    border: 1px solid #3f4046;
    border-top: none;
    border-radius: 0 0 5px 5px;
    overflow: hidden;
}

.win {
    width: 28px;
    height: 17px;
    display: flex;
    align-items: center;
    justify-content: center;
    border-right: 1px solid #3f4046;
    background: linear-gradient(#b5b7bb, #8b8d93 50%, #5f6168 50%, #8f9197);
    box-shadow: inset 0 0 0 1px rgba(255, 255, 255, 0.4);
}

.win svg {
    width: 14px;
    height: 12px;
}

.win-close {
    width: 47px;
    border-right: none;
    background: linear-gradient(#e2a596, #cb5f48 50%, #b8260d 50%, #d9714c);
}

/* Menu and toolbars */
.chrome {
    flex: none;
    display: flex;
    flex-direction: column;
    gap: 1px;
    background: linear-gradient(to right, #9ebef5, #c3d8f9 50%);
}

.menubar {
    height: 26px;
    display: flex;
    align-items: center;
    padding-left: 5px;
}

.menubar > button {
    padding: 0 8px;
}

.menubar > .doc-btn {
    padding: 0 5px;
}

.doc-btn svg {
    width: 9px;
    height: 9px;
}

.grip {
    flex: none;
    width: 2px;
    height: 14px;
    margin-right: 2px;
    background: repeating-linear-gradient(#27417f 0 2px, transparent 2px 4px);
}

.ask {
    display: flex;
    width: 178px;
    height: 20px;
    margin-left: auto;
    border: 1px solid #fff;
    background: #fff;
}

.ask input {
    flex: 1;
    min-width: 0;
    padding-left: 2px;
}

.ask input::placeholder {
    color: #808080;
}

.drop {
    width: 11px;
    display: flex;
    align-items: center;
    justify-content: center;
    background: #c3d8f9;
}

.caret {
    width: 5px;
    height: 3px;
}

.toolbar {
    align-self: flex-start;
    display: flex;
    align-items: center;
    height: 25px;
    margin-left: 2px;
    padding-left: 3px;
    border-bottom: 1px solid #3b619c;
    border-radius: 4px 0 0 4px;
    background: linear-gradient(#ddecfe, #c3dafa 50%, #8fb3ec 90%, #81a9e2);
}

.tool {
    width: 23px;
    height: 22px;
    display: flex;
    align-items: center;
    justify-content: center;
}

.tool svg {
    width: 16px;
    height: 16px;
    font-family: "Liberation Sans", sans-serif;
}

.pressed {
    border: 1px solid #000080;
    background: #fdb667;
}

.more {
    width: 11px;
    height: 22px;
    display: flex;
    align-items: center;
    justify-content: center;
}

.off {
    fill: #8d9dbd;
}

.sep {
    width: 2px;
    height: 16px;
    margin: 0 2px;
    background: linear-gradient(to right, #6a8ccb 50%, #f1f9ff 50%);
}

.combo {
    display: flex;
    height: 20px;
    margin-right: 2px;
    border: 1px solid #fff;
    background: #fff;
}

.combo input {
    flex: 1;
    min-width: 0;
    padding-left: 2px;
}

.combo-zoom {
    width: 68px;
}

.combo-font {
    width: 152px;
}

.combo-size {
    width: 45px;
}

.letter {
    font: 14px/18px "Liberation Serif", serif;
}

.sign-btn {
    font: 12px/18px "Liberation Sans", sans-serif;
}

.cap {
    align-self: stretch;
    width: 12px;
    display: flex;
    align-items: flex-end;
    justify-content: center;
    margin-bottom: -1px;
    padding-bottom: 3px;
    border-radius: 0 4px 4px 0;
    background: linear-gradient(#6a9aee, #2b62c6 60%, #002f96);
}

.cap svg {
    width: 7px;
    height: 7px;
}

.text-tool {
    display: flex;
    align-items: center;
    gap: 5px;
    padding: 0 3px 0 4px;
}

/* Formula bar */
.formulabar {
    flex: none;
    display: flex;
    height: 16px;
    background: #9ebef5;
}

.namebox {
    width: 78px;
    margin-left: 2px;
    text-align: center;
    background: #fff;
}

.name-drop {
    width: 19px;
    display: flex;
    align-items: center;
    justify-content: center;
}

.name-drop svg {
    width: 7px;
    height: 4px;
}

.fx {
    width: 53px;
    padding-right: 3px;
    text-align: right;
    font: bold 13px/14px "Liberation Serif", serif;
}

.formula {
    flex: 1;
    background: #fff;
}

/* Sheet */
.sheet {
    flex: 1;
    min-height: 0;
    display: flex;
    border-top: 1px solid #9d9da1;
    border-left: 1px solid #9d9da1;
    background: #fff;
    font: 8px/9px "Liberation Sans", sans-serif;
}

.grid {
    position: relative;
    flex: 1;
    min-width: 0;
    display: flex;
    flex-direction: column;
    overflow: hidden;
}

.col-heads {
    flex: none;
    display: flex;
    height: 12px;
    border-top: 1px solid #716f64;
    border-bottom: 1px solid #716f64;
    background: #efebde;
    line-height: 10px;
    text-align: center;
}

.col-heads span {
    flex: none;
    overflow: hidden;
    border-right: 1px solid #716f64;
}

.col-heads span:last-child {
    flex: 1;
    border-right: none;
    text-align: right;
}

.col-heads .selected,
.row-heads .selected {
    background: #ffbe6b;
    border-color: #000080;
}

.grid-body {
    flex: 1;
    min-height: 0;
    display: flex;
}

.row-heads {
    flex: none;
    width: 16px;
    border-right: 1px solid #716f64;
    background: #efebde;
    text-align: center;
}

.row-heads span {
    display: flex;
    align-items: flex-end;
    justify-content: center;
    overflow: hidden;
    border-bottom: 1px solid #716f64;
}

.page {
    flex: none;
    height: 100%;
    margin-left: 4px;
    padding: 0 4px 0 3px;
    overflow: hidden;
    border-left: 1px solid #000;
    border-right: 1px solid #000;
}

.page-logo {
    display: flex;
    gap: 13px;
    height: 16px;
    padding-left: 6px;
    color: #f00;
    font: 10px/12px "DejaVu Sans", sans-serif;
    white-space: pre;
}

.page-logo svg {
    width: 28px;
    height: 12px;
}

.page-project {
    display: flex;
    justify-content: space-between;
    align-items: center;
    height: 18px;
    padding: 0 2px 0 3px;
}

.page-project h2 {
    font: bold 12px/16px "Liberation Serif", serif;
}

.page-project p {
    display: flex;
    gap: 16px;
    font: bold 8px/10px "Liberation Sans", sans-serif;
}

.page-no {
    height: 14px;
    padding: 7px 28px 0 0;
    text-align: right;
    font-size: 7px;
    line-height: 12px;
}

.page-title {
    display: flex;
    align-items: center;
    height: 22px;
}

.page-title h3 {
    flex: 1;
    margin-top: -6px;
    text-align: center;
    font: italic bold 18px/20px "Liberation Serif", serif;
}

.rule {
    height: 5px;
    border-top: 3px solid #444;
    border-bottom: 1px solid #000;
}

.rule-left {
    width: 598px;
}

.rule-right {
    width: 161px;
}

/* Payroll table */
.payroll {
    width: 1035px;
    table-layout: fixed;
    border-spacing: 0;
}

.payroll th,
.payroll td {
    border-right: 1px solid #000;
    border-bottom: 1px solid #000;
    overflow: hidden;
    white-space: nowrap;
}

.payroll .head-top th:first-child,
.payroll td:first-child {
    border-left: 1px solid #000;
}

.payroll th {
    background: #d0d0d0;
    font-size: 7px;
    line-height: 11px;
}

.payroll .open {
    border-bottom: none;
}

.head-top th {
    height: 15px;
    border-top: 2px solid #000;
}

.head-sub th {
    height: 23px;
}

.payroll .small {
    font-size: 6px;
}

.payroll .tiny {
    font-size: 5px;
}

.payroll .spacer td {
    height: 3px;
    border-left: none;
    border-right: none;
}

.section td {
    height: 14px;
    border-right: none;
    font: italic bold 8px/10px "Open Sans", sans-serif;
}

.section td:last-child {
    border-right: 1px solid #000;
    padding-left: 2px;
}

.section td:first-child {
    text-align: center;
}

.entry td,
.subtotal td {
    height: 13px;
    padding-bottom: 2px;
    text-align: right;
}

.entry td {
    border-bottom-style: dotted;
}

.entry.last td {
    border-bottom-style: solid;
}

.payroll .amount {
    padding-right: 2px;
}

.payroll .dash {
    padding-right: 10px;
}

.payroll .center {
    text-align: center;
}

.payroll .name {
    padding-left: 3px;
    text-align: left;
    font-size: 7px;
}

.payroll .status {
    padding-left: 1px;
    text-align: left;
    font-size: 7px;
}

.payroll .shade {
    background: #d0d0d0;
}

.subtotal td {
    font-size: 7px;
    font-weight: bold;
}

.subtotal .label {
    padding-right: 8px;
}

.grand td {
    height: 19px;
    border-bottom: 3px double #000;
}

.note {
    height: 20px;
    padding: 5px 0 0 2px;
    font-size: 7px;
    font-weight: bold;
    line-height: 12px;
}

.note-boxes {
    width: 20px;
    border: 1px solid #000;
    border-bottom: none;
}

.note-boxes span {
    display: block;
    height: 13px;
    border-bottom: 1px solid #000;
}

.signatures {
    display: grid;
    grid-template-columns: 227px 315px 301px 188px;
    margin: 15px 0 0 2px;
    height: 80px;
}

.signature {
    position: relative;
    min-width: 0;
    margin-right: 94px;
    padding-left: 18px;
    border: 1px solid #444;
    border-radius: 14px 14px 0 0;
}

.signature-wide {
    margin-right: 40px;
    padding-left: 8px;
}

.signature-near {
    margin-right: 92px;
    padding-left: 12px;
}

.signature:last-child {
    margin-right: 0;
}

.signature legend {
    height: 20px;
    margin-left: 2px;
    padding: 0 2px;
    background: #fff;
    font: bold 10px/10px "Liberation Sans", sans-serif;
}

.signature-wide legend {
    margin-left: 12px;
}

.signature .company {
    margin: -8px 0 0 3px;
    font: bold 9px/12px "Liberation Sans", sans-serif;
}

.signature-wide .company {
    margin-left: 13px;
}

.signature .person {
    width: 100px;
    margin-top: 26px;
    padding-left: 3px;
    border-bottom: 1px solid #000;
    font-size: 7px;
    line-height: 10px;
}

.signature-wide .person {
    width: 142px;
    padding-left: 12px;
}

.signature .role {
    padding: 1px 0 0 3px;
    font-size: 7px;
    line-height: 8px;
}

.signature-wide .role {
    padding-left: 12px;
}

/* handwritten signature over the name */
.ink {
    position: absolute;
    left: 3px;
    top: -4px;
    width: 84px;
    height: 44px;
}

.page-gap {
    width: 22px;
}

.backdrop {
    flex: 1;
    min-width: 0;
    padding-top: 84px;
    background: #003300;
}

.highlight {
    width: 60px;
    height: 23px;
    margin-left: auto;
    background: #ff0;
}

/* Freeze panes and the active cell lie over the cells */
.freeze-v {
    position: absolute;
    left: 209px;
    top: 12px;
    bottom: 0;
    border-left: 1px solid #666;
}

.freeze-h {
    position: absolute;
    left: 0;
    right: 0;
    top: 136px;
    border-top: 1px solid #666;
}

.cursor {
    position: absolute;
    left: 775px;
    top: 475px;
    width: 40px;
    height: 16px;
    border: 3px solid #000;
}

.cursor span {
    position: absolute;
    right: -4px;
    bottom: -4px;
    width: 6px;
    height: 6px;
    border: 1px solid #fff;
    border-width: 1px 0 0 1px;
    background: #000;
}

.vscroll {
    flex: none;
    display: flex;
    flex-direction: column;
    width: 17px;
    margin-right: 1px;
    fill: #444;
    background: #f0f0f0;
}

.vscroll button {
    height: 17px;
    display: flex;
    align-items: center;
    justify-content: center;
}

.vscroll svg {
    width: 7px;
    height: 4px;
}

.thumb {
    flex: 361;
    margin: 1px;
    border: 1px solid #979797;
    border-radius: 2px;
    background: repeating-linear-gradient(#555 0 1px, transparent 1px 3px) center / 7px 8px no-repeat, linear-gradient(to right, #f5f5f5, #e8e8e8 50%, #d2d2d5 50%, #c6c6ca);
}

.track {
    flex: 162;
}

/* Sheet tabs */
.tabbar {
    flex: none;
    display: flex;
    align-items: center;
    height: 17px;
    padding-left: 1px;
    background: #f0f0f0;
}

.nav {
    width: 16px;
    display: flex;
    justify-content: center;
}

.nav svg {
    width: 8px;
    height: 8px;
}

.tabs {
    align-self: stretch;
    display: flex;
    border-left: 1px solid #888;
}

.tabs button {
    padding: 0 6px;
    border-top: 1px solid #555;
    border-bottom: 1px solid #888;
    line-height: 15px;
}

.tabs .active {
    border-color: #fff;
    background: #fff;
    font-weight: bold;
}

.tabs svg {
    width: 8px;
    height: 17px;
}

.hscroll {
    display: flex;
    align-items: center;
    width: 134px;
    height: 17px;
    margin-left: auto;
    fill: #444;
    background: #e9e9eb;
}

.hscroll button {
    width: 18px;
    display: flex;
    justify-content: center;
}

.hscroll button svg {
    width: 4px;
    height: 7px;
}

.splitter {
    width: 7px;
    height: 15px;
    border: 1px solid #c6c6ca;
    border-right: 1px solid #000;
    background: #f6f6f6;
}

.hthumb {
    width: 17px;
    height: 15px;
    border: 1px solid #979797;
    border-radius: 2px;
    background: repeating-linear-gradient(to right, #555 0 1px, transparent 1px 3px) center / 7px 7px no-repeat, linear-gradient(#f5f5f5, #d2d2d5);
}

.hscroll .hright {
    margin-left: auto;
}

.resize {
    width: 8px;
    height: 8px;
    margin: 4px 3px 0 7px;
    background: linear-gradient(135deg, #f0f0f0 50%, transparent 50%), radial-gradient(#a5a5a5 1px, transparent 1px) 0 0 / 4px 4px;
}

/* Drawing toolbar */
.drawbar {
    flex: none;
    display: flex;
    height: 29px;
    padding-left: 2px;
    gap: 2px;
    border-top: 2px solid #f4f7fd;
    background: linear-gradient(to right, #9ebef5, #c3d8f9 50%);
}

.drawbar .toolbar {
    margin-top: 1px;
}

/* Status bar */
.statusbar {
    flex: none;
    display: flex;
    align-items: center;
    height: 18px;
    padding: 2px 3px 0 4px;
    background: #f0f0f0;
}

.status-ready {
    width: 111px;
}

.panes {
    display: flex;
    gap: 1px;
    margin-left: auto;
}

.pane {
    width: 26px;
    height: 15px;
    border: 1px solid #d0d0d0;
}

.pane:first-child {
    width: 34px;
}

.panes .pane-wide {
    width: 112px;
}

/* Taskbar */
.taskbar {
    position: relative;
    flex: none;
    display: flex;
    height: 30px;
    padding-left: 60px;
    gap: 4px;
    border-top: 1px solid #222;
    background:
        radial-gradient(120px 40px at 690px 24px, #6d5f70, transparent),
        radial-gradient(120px 40px at 1090px 10px, #7b6a7d, transparent),
        radial-gradient(60px 12px at 580px 24px, #5a4030, transparent),
        radial-gradient(80px 12px at 900px 6px, #4f3a30, transparent),
        linear-gradient(to right, #17171c, #1f1d24 5%, #6b607c 10%, #6b607c 14%, #5a4f60 22%, #3d3339 30%, #322c30 42%, #2b2629 60%, #26232a 74%, #4b434f 84%, #1d1b22 90%, #26242a);
}

.start {
    position: absolute;
    left: 8px;
    top: -6px;
    width: 38px;
    height: 38px;
}

.task {
    width: 42px;
    height: 28px;
    display: flex;
    align-items: center;
    justify-content: center;
    border: 1px solid rgba(255, 255, 255, 0.55);
    border-radius: 2px;
    background: linear-gradient(160deg, rgba(255, 255, 255, 0.35), rgba(255, 255, 255, 0.12) 60%);
}

.task svg {
    width: 17px;
    height: 17px;
}

.task-idle {
    border-color: transparent;
    background: none;
}

.task-lit {
    background: rgba(200, 190, 220, 0.45);
}

.task-active {
    background: linear-gradient(160deg, #efedf2, #b5b0ba);
}

.tray {
    display: flex;
    align-items: center;
    margin-left: auto;
    margin-right: 26px;
    color: #fff;
}

.lang {
    margin-right: 18px;
    padding-bottom: 4px;
}

.tray-up {
    width: 7px;
    height: 4px;
    margin-right: 12px;
}

.tray-icon {
    width: 16px;
    height: 16px;
    margin-right: 9px;
}

.tray time {
    margin-left: 20px;
}

.desktop {
    width: 14px;
    border: 1px solid rgba(255, 255, 255, 0.4);
    background: rgba(255, 255, 255, 0.12);
}
```
FILE: script.js
```js
// column letter and width in pixels
const columns = [
    ['', 16], ['A', 4], ['B', 5], ['C', 19], ['D', 98], ['E', 68], ['F', 40], ['G', 20],
    ['H', 41], ['I', 44], ['J', 26], ['K', 39], ['L', 44], ['M', 41], ['N', 41], ['O', 35],
    ['P', 41], ['Q', 44], ['R', 37], ['S', 37], ['T', 37], ['U', 37], ['V', 45], ['W', 40],
    ['X', 40], ['Y', 40], ['Z', 47], ['AA', 33], ['AB', 5], ['AC', 4], ['AD', 19], ['AE', 79],
    ['AF', 61], ['AG', 61], ['AH', 24], ['AI', 0]
];

// row number and height in pixels
const rows = [
    ['4', 8], ['5', 9], ['6', 15], ['7', 10], ['8', 12], ['', 4], ['', 3], ['11', 11], ['12', 13],
    ['13', 23], ['', 3], ['15', 14], ['16', 13], ['17', 13], ['18', 13], ['19', 13], ['20', 13],
    ['21', 13], ['22', 13], ['23', 13], ['24', 14], ['25', 13], ['26', 13], ['27', 13], ['28', 13],
    ['29', 13], ['30', 13], ['31', 13], ['32', 13], ['33', 13], ['34', 13], ['35', 13], ['36', 18],
    ['37', 5], ['38', 13], ['39', 4], ['40', 13], ['41', 13], ['42', 13], ['43', 13], ['44', 10],
    ['45', 9], ['46', 11], ['47', 8], ['48', 8], ['49', 8], ['50', 10], ['51', 4]
];

const tabs = ['Data finger', 'Data_finger', 'Timesheet', 'Salary PJA', 'Slip staf', 'Slip STAFF',
    'Rec. gaji', 'Data payroll', 'Rincian iuran', 'Rincian Upah', '1b (keluar)', 'TABLE'];

// cells from column C to AA
const payroll = [
    'section|1|STAFF',
    'entry|1|AHMAD AFANDI PS|SDCC|STAFF|29|3.412.500|3.412.500|29|787.500|787.500|525.000|525.000|525.000|525.000|1.837.500|-|-|-|-|5.250.000|68.250|-|-|5.181.750|',
    'entry|2|SUPARMAN|QC INSPECTOR|STAFF|31|4.712.500|4.712.500|31|1.087.500|1.087.500|725.000|725.000|725.000|725.000|2.537.500|-|-|-|-|7.250.000|94.250|-|-|7.155.750|',
    'entry|3|MANGASI SILAEN|SPV. MECHANICAL|STAFF|31|4.875.000|4.875.000|31|1.125.000|1.125.000|750.000|750.000|750.000|750.000|2.625.000|-|-|-|-|7.500.000|97.500|-|-|7.402.500|',
    'entry|4|ENDANG SAPUTRA|FOREMAN|STAFF|22|3.375.000|3.375.000|21|675.000|675.000|-|-|450.000|450.000|1.125.000|-|-|-|-|4.500.000|67.500|-|-|4.432.500|',
    'entry|5|ANTON SAPTONO|LEADMAN|STAFF|26|3.000.000|3.000.000|25|600.000|600.000|-|-|400.000|400.000|1.000.000|-|-|-|-|4.000.000|60.000|-|-|3.940.000|',
    'entry|6|HARYANTO|SEMI SKILL|STAFF|27|2.625.000|2.625.000|26|525.000|525.000|-|-|350.000|350.000|875.000|-|-|-|-|3.500.000|52.500|-|-|3.447.500|',
    'entry last|7|-|-|||-|-||-|-|-|-|-|-|-|-|-|-|-|-|-|-|-|-|',
    'subtotal|SUB TOTAL|||22.000.000|||4.800.000||2.000.000||3.200.000|10.000.000||-|-||32.000.000|440.000|-|-|31.560.000|',
    'section|2|NON STAFF',
    'entry|1|-|-|||-|-||-|-|||||-|-|-|-|-|-|-|-|-|-|',
    'entry|2|-|-|||-|-||-|-|||||-|-|-|-|-|-|-|-|-|-|',
    'entry|3|-|-|||-|-||-|-|||||-|-|-|-|-|-|-|-|-|-|',
    'entry last|4|-|-|||-|-||-|-|||||-|-|-|-|-|-|-|-|-|-|',
    'subtotal|SUB TOTAL|||-|||-||-||-|-||-|-||-|-|-|-|-|',
    'section|3|HARIAN LEPAS',
    'entry|1||||||||||||||||||||||||',
    'entry|2||||||||||||||||||||||||',
    'entry|3||||||||||||||||||||||||',
    'entry last|4||||||||||||||||||||||||',
    'subtotal|SUB TOTAL|||||||||||||||||||||',
    'subtotal grand|GRAND TOTAL|||22.000.000|||4.800.000||2.000.000||3.200.000|10.000.000||-|-||32.000.000|440.000|-|-|31.560.000|-'
];

// I, Q, T, V and Z are shaded in every row
const shaded = [6, 14, 17, 19, 23];
const grandShaded = [6, 14, 17, 19, 20, 21, 22, 23, 24];

function cellClass(value, col, type) {
    const names = [];
    if (col === 0 || col === 4 || col === 7) names.push('center');
    else if (value === '-') names.push('dash');
    else if (col === 1 || col === 2) names.push('name');
    else if (col === 3) names.push('status');
    else names.push('amount');
    const list = type.includes('grand') ? grandShaded : shaded;
    if (list.includes(col)) names.push('shade');
    return names.join(' ');
}

function payrollRow(line) {
    const [type, ...cells] = line.split('|');
    if (type === 'section') {
        return `<tr class="section"><td>${cells[0]}</td><td colspan="24">${cells[1]}</td></tr>`;
    }
    let html = '';
    let col = 0;
    if (type.includes('subtotal')) {
        html += `<td class="label" colspan="4">${cells.shift()}</td>`;
        col = 4;
    }
    for (const value of cells) {
        html += `<td class="${cellClass(value, col, type)}">${value}</td>`;
        col++;
    }
    return `<tr class="${type}">${html}</tr>`;
}

document.getElementById('colHeads').innerHTML = columns.map(([name, width]) =>
    `<span class="${name === 'U' ? 'selected' : ''}" style="width: ${width}px">${name}</span>`).join('');

document.getElementById('rowHeads').innerHTML = rows.map(([name, height]) =>
    `<span class="${name === '43' ? 'selected' : ''}" style="height: ${height}px">${name}</span>`).join('');

// the first table column also holds the left border
document.getElementById('payrollCols').innerHTML = columns.slice(3, 28).map(([name, width]) =>
    `<col style="width: ${name === 'C' ? width + 1 : width}px">`).join('');

document.getElementById('payrollBody').innerHTML =
    '<tr class="spacer"><td colspan="25"></td></tr>' + payroll.map(payrollRow).join('');

const slash = '<svg viewBox="0 0 8 17"><path d="M8 0L1 16.500" fill="none" stroke="#555"/><path d="M0 0.500l3 6" fill="none" stroke="#999"/></svg>';
const backslash = '<svg viewBox="0 0 8 17"><path d="M0 0l7 16.500" fill="none" stroke="#555"/></svg>';

document.getElementById('tabs').innerHTML = backslash + tabs.map((name) =>
    `<button class="${name === 'Rec. gaji' ? 'active' : ''}">${name}</button>${name === 'Slip STAFF' ? backslash : slash}`).join('');
```
